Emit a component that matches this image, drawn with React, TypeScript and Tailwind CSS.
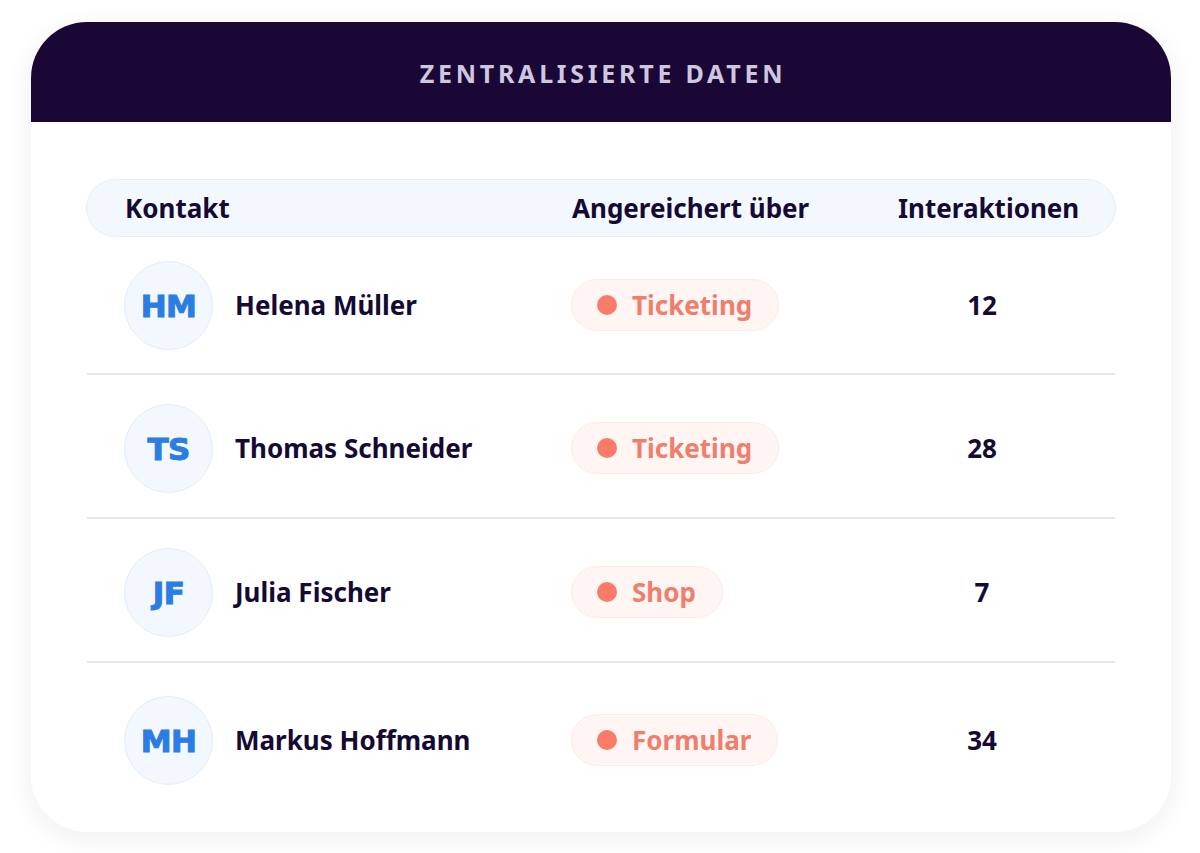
import React from "react";

const rows = [
  { ini: "HM", name: "Helena Müller", src: "Ticketing", n: "12" },
  { ini: "TS", name: "Thomas Schneider", src: "Ticketing", n: "28" },
  { ini: "JF", name: "Julia Fischer", src: "Shop", n: "7" },
  { ini: "MH", name: "Markus Hoffmann", src: "Formular", n: "34" },
];

export default function App() {
  return (
    <div className="w-[1200px] h-[853px] bg-white pt-[22px] pl-[31px]" style={{ fontFamily: '"Noto Sans", "Open Sans", sans-serif' }}>
      <div className="w-[1140px] h-[810px] rounded-[56px] bg-white overflow-hidden shadow-[0_6px_28px_rgba(30,20,60,0.07)] flex flex-col">
        <div className="h-[100px] bg-[#1a0736] flex items-center justify-center pt-[4px]">
          <span className="text-[25px] font-bold tracking-[0.15em] text-[#cfc7e0] pl-[4px]">ZENTRALISIERTE DATEN</span>
        </div>
        <div className="px-[55px] pt-[57px]">
          <div className="h-[58px] rounded-full bg-[#f3f7fe] border border-[#e6edf7] grid grid-cols-[447px_326px_1fr] items-center pl-[38px] pr-[40px] text-[26px] font-bold text-[#140a33]">
            <span>Kontakt</span>
            <span>Angereichert über</span>
            <span className="text-center pr-[2px]">Interaktionen</span>
          </div>
          <div className="flex flex-col">
            {rows.map((r, i) => (
              <div
                key={r.ini}
                className={
                  "grid grid-cols-[447px_326px_1fr] items-center pl-[37px] pr-[40px] mx-[1px] " +
                  (i === 0 ? "h-[138px] border-b-2 border-[#e7e8ec]" : i === 3 ? "h-[150px] pt-[4px]" : "h-[144px] pt-[4px] border-b-2 border-[#e7e8ec]")
                }
              >
                <div className="flex items-center gap-[22px]">
                  <div className="w-[89px] h-[89px] rounded-full bg-[#f3f7fe] border border-[#e4ecf7] flex items-center justify-center">
                    <span className="text-[31px] font-bold text-[#2b7ce3] tracking-[-0.02em] [-webkit-text-stroke:1px_#2b7ce3] pt-[2px]" style={{ fontFamily: '"DejaVu Sans", Inter, sans-serif' }}>{r.ini}</span>
                  </div>
                  <span className="text-[26px] font-bold text-[#140a33]">{r.name}</span>
                </div>
                <div>
                  <div className="inline-flex items-center h-[52px] rounded-full bg-[#fff5f3] border border-[#fdebe7] pl-[25px] pr-[26px] gap-[15px]">
                    <span className="w-[20px] h-[20px] rounded-full bg-[#fb7b69]"></span>
                    <span className="text-[26px] font-bold text-[#f07e6c]">{r.src}</span>
                  </div>
                </div>
                <div className="text-center text-[26px] font-bold text-[#140a33] pr-[8px]">{r.n}</div>
              </div>
            ))}
          </div>
        </div>
      </div>
    </div>
  );
}
